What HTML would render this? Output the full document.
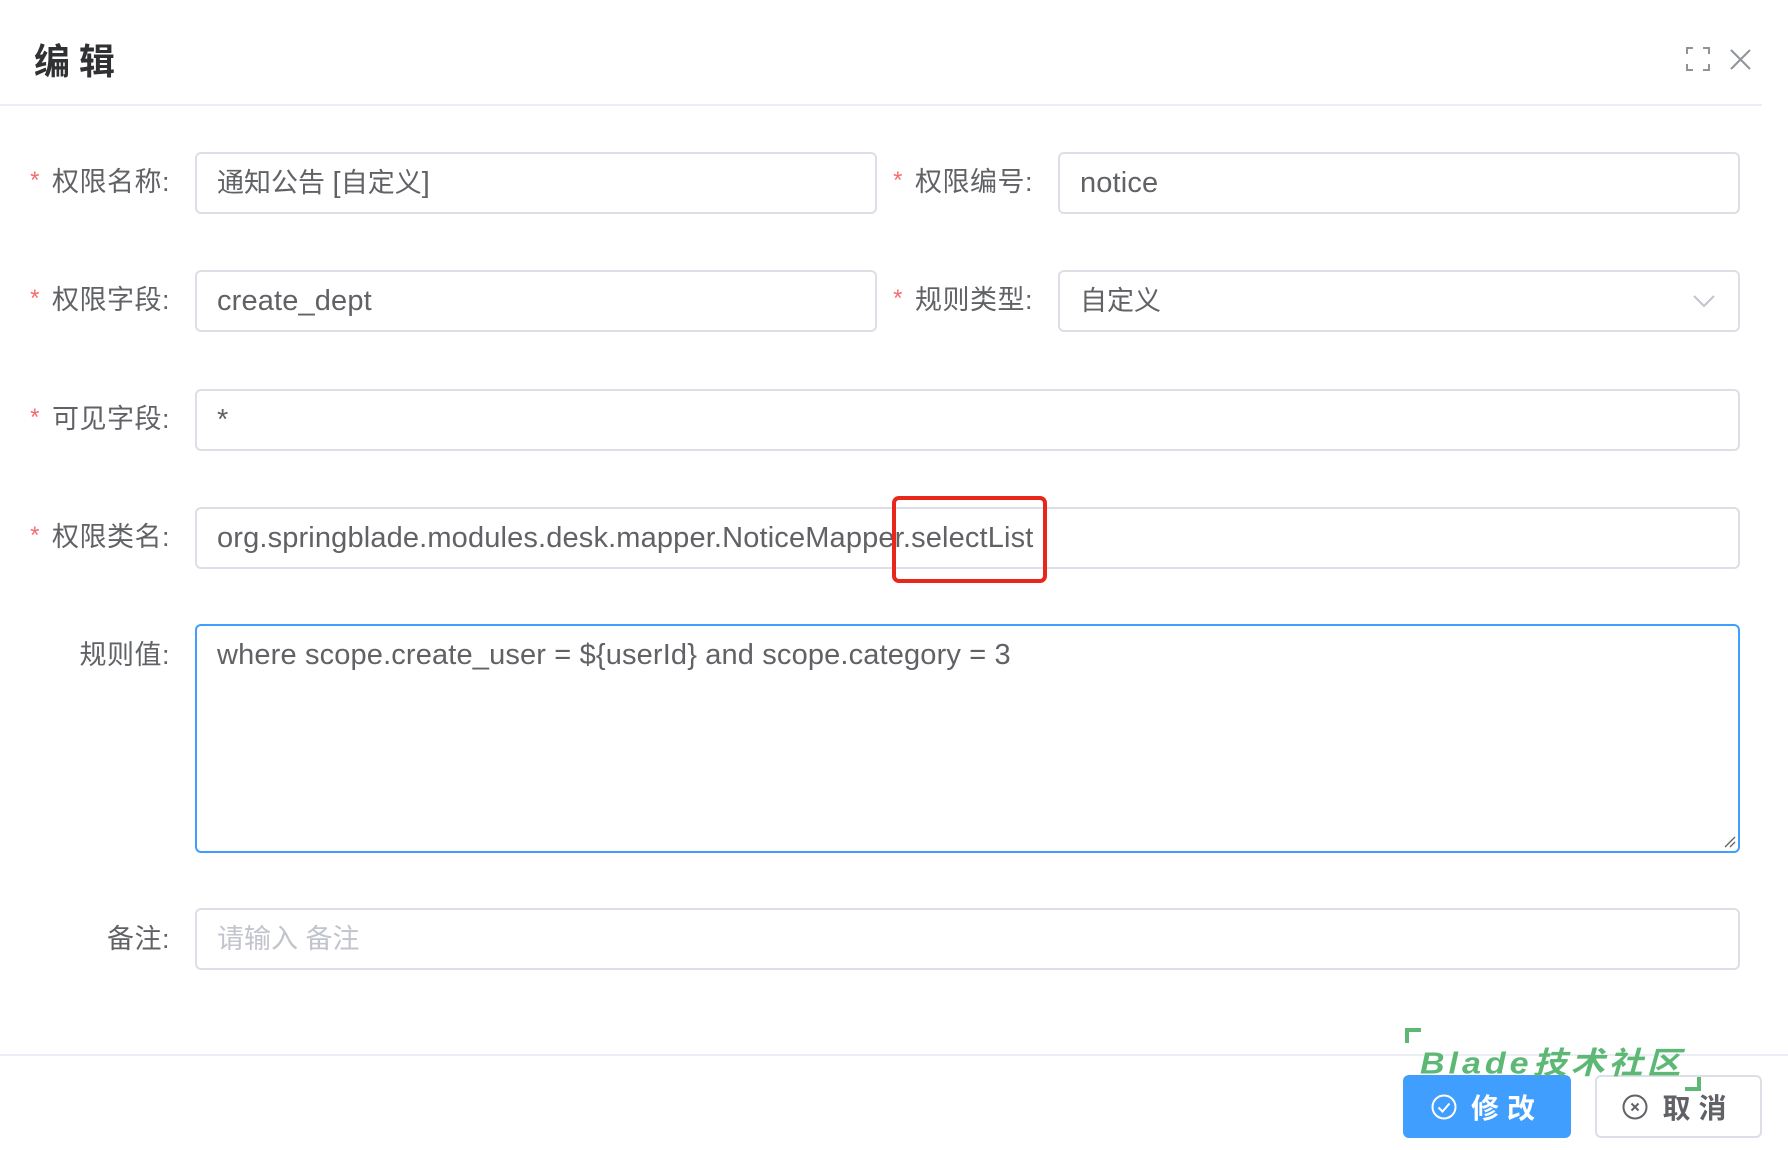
<!DOCTYPE html>
<html><head><meta charset="utf-8"><style>
*{box-sizing:border-box;margin:0;padding:0}
body{width:1788px;height:1150px;background:#fff;position:relative;overflow:hidden;font-family:"Liberation Sans","Noto Sans CJK SC",sans-serif;color:#606266}
.abs{position:absolute}
.title{left:34px;top:33px;font-size:36px;font-weight:bold;color:#303133;letter-spacing:9px}
.hline{left:0;top:104px;width:1762px;height:2px;background:#ebeef5}
.fline{left:0;top:1054px;width:1788px;height:2px;background:#ebeef5}
.lbl{font-size:27px;color:#606266;text-align:right;width:170px;line-height:61px;white-space:nowrap;letter-spacing:0.5px}
.lbl b{color:#f56c6c;font-weight:normal;font-size:24px;margin-right:12px;position:relative;top:-3px}
.inp{border:2px solid #dcdfe6;border-radius:6px;height:62px;font-size:27px;line-height:58px;padding-left:20px;color:#606266;white-space:nowrap}
.l{font-size:29px;letter-spacing:0.15px}
.btn{border-radius:6px;height:63px;font-size:28px;font-weight:bold;display:flex;align-items:center;justify-content:center;letter-spacing:8px}
</style></head><body>
<div class="abs title">编辑</div>
<svg class="abs" style="left:1686px;top:47px" width="24" height="24" viewBox="0 0 24 24" fill="none" stroke="#909399" stroke-width="2"><path d="M1 7V1h6M17 1h6v6M23 17v6h-6M7 23H1v-6"/></svg>
<svg class="abs" style="left:1730px;top:49px" width="21" height="21" viewBox="0 0 21 21" stroke="#909399" stroke-width="2"><path d="M1 1L20 20M20 1L1 20"/></svg>
<div class="abs hline"></div>

<div class="abs lbl" style="left:0;top:152px"><b>*</b>权限名称:</div>
<div class="abs inp" style="left:195px;top:152px;width:682px">通知公告 <span class="l">[</span>自定义<span class="l">]</span></div>
<div class="abs lbl" style="left:863px;top:152px;width:170px"><b>*</b>权限编号:</div>
<div class="abs inp l" style="left:1058px;top:152px;width:682px">notice</div>

<div class="abs lbl" style="left:0;top:270px"><b>*</b>权限字段:</div>
<div class="abs inp l" style="left:195px;top:270px;width:682px">create_dept</div>
<div class="abs lbl" style="left:863px;top:270px;width:170px"><b>*</b>规则类型:</div>
<div class="abs inp" style="left:1058px;top:270px;width:682px">自定义</div>
<svg class="abs" style="left:1693px;top:295px" width="22" height="13" viewBox="0 0 22 13" fill="none" stroke="#c0c4cc" stroke-width="2"><path d="M1 1l10 10 10-10"/></svg>

<div class="abs lbl" style="left:0;top:389px"><b>*</b>可见字段:</div>
<div class="abs inp l" style="left:195px;top:389px;width:1545px">*</div>

<div class="abs lbl" style="left:0;top:507px"><b>*</b>权限类名:</div>
<div class="abs inp l" style="left:195px;top:507px;width:1545px">org.springblade.modules.desk.mapper.NoticeMapper.selectList</div>
<div class="abs" style="left:892px;top:496px;width:155px;height:87px;border:4px solid #e8261c;border-radius:7px"></div>

<div class="abs lbl" style="left:0;top:625px;line-height:61px">规则值:</div>
<div class="abs inp l" style="left:195px;top:624px;width:1545px;height:229px;border-color:#409eff;line-height:58px">where scope.create_user = ${userId} and scope.category = 3</div>
<svg class="abs" style="left:1724px;top:836px" width="12" height="12" viewBox="0 0 12 12" stroke="#606266" stroke-width="1.3"><path d="M1 11L11 1M6 11L11 6"/></svg>

<div class="abs lbl" style="left:0;top:909px">备注:</div>
<div class="abs inp" style="left:195px;top:908px;width:1545px;color:#c0c4cc">请输入 备注</div>

<div class="abs fline"></div>
<div class="abs btn" style="left:1403px;top:1075px;width:168px;background:#409eff;color:#fff">
<svg width="26" height="26" viewBox="0 0 26 26" fill="none" stroke="#fff" stroke-width="2" style="margin-right:14px"><circle cx="13" cy="13" r="11.5"/><path d="M7.5 13.5l4 4 7-8"/></svg>修改</div>
<div class="abs btn" style="left:1595px;top:1075px;width:167px;border:2px solid #dcdfe6;color:#606266">
<svg width="26" height="26" viewBox="0 0 26 26" fill="none" stroke="#606266" stroke-width="2" style="margin-right:14px"><circle cx="13" cy="13" r="11.5"/><path d="M9.5 9.5l7 7M16.5 9.5l-7 7"/></svg>取消</div>

<svg class="abs" style="left:1405px;top:1027px" width="300" height="65" viewBox="0 0 300 65" fill="none" stroke="#5cb874" stroke-width="4"><path d="M2 16V3h14M294 50v12h-14"/></svg>
<div class="abs" style="left:1420px;top:1036px;font-size:34px;font-weight:bold;font-style:italic;color:#5cb874;letter-spacing:4px;white-space:nowrap;transform:scaleY(0.9)">Blade技术社区</div>
</body></html>
